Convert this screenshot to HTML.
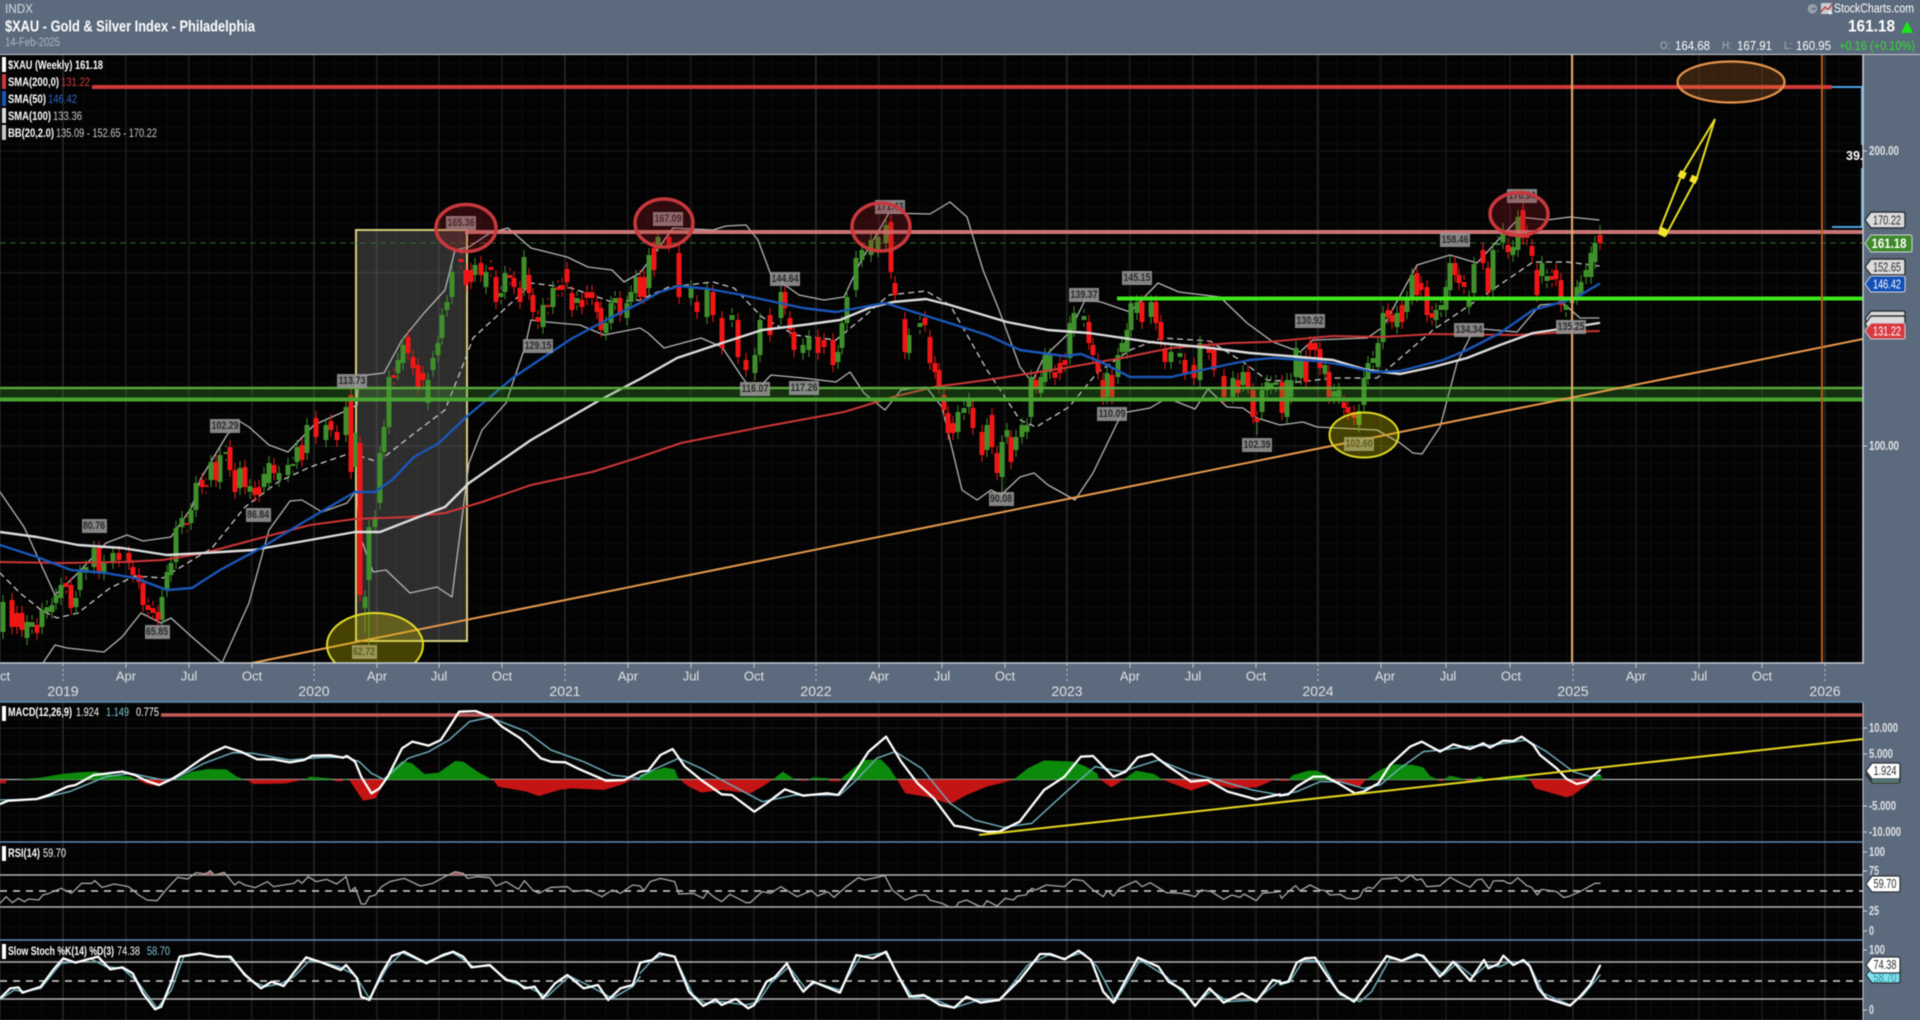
<!DOCTYPE html>
<html><head><meta charset="utf-8"><title>$XAU</title>
<style>
html,body{margin:0;padding:0;background:#5b6a7c;width:1920px;height:1020px;overflow:hidden}
svg{display:block;filter:blur(.45px)}
text{font-family:"Liberation Sans",sans-serif;dominant-baseline:central}
.z polyline,.z path,.z polygon{vector-effect:non-scaling-stroke}
polyline{fill:none;stroke-linejoin:round;stroke-linecap:round}
.a rect{fill:#969696;opacity:.88}
.a text{font-size:11px;font-weight:bold;fill:#2a2a2a;text-anchor:middle}
.m text{font-size:13px;fill:#e0e3e6;text-anchor:middle}
.y text{font-size:14px;fill:#e0e3e6;text-anchor:middle}
.l text{font-size:11.5px;fill:#fff;font-weight:bold}
.r text{font-size:12.5px;fill:#dfe2e5;font-weight:bold}
.t text{font-size:12.5px;text-anchor:middle;fill:#2b2b2b}
.w{stroke:#fff;stroke-width:2.3}
.c{stroke:#6cabb9;stroke-width:1.5}
.g{stroke:#a8a8a8;stroke-width:1.3}
</style></head><body>
<svg width="1920" height="1020" viewBox="0 0 1920 1020" xmlns="http://www.w3.org/2000/svg">
<defs>
<pattern id="mg" x="0" y="0" width="20.9" height="16" patternUnits="userSpaceOnUse"><path d="M20.9 0V16M0 16H20.9" stroke="#121212" stroke-width="1" fill="none"/></pattern>
<clipPath id="mc"><rect x="0" y="55" width="1863" height="608"/></clipPath>
<path id="t40" d="M0 8L6 0H38Q40 0 40 2V14Q40 16 38 16H6Z"/>
<path id="t47" d="M0 8.5L6 0H45Q47 0 47 2V15Q47 17 45 17H6Z"/>
<path id="t34" d="M0 8L6 0H32Q34 0 34 2V14Q34 16 32 16H6Z"/>
</defs>

<rect width="1920" height="1020" fill="#5b6a7c"/>
<!-- panels -->
<rect x="0" y="55" width="1863" height="608" fill="#030303"/>
<rect x="0" y="702" width="1863" height="318" fill="#030303"/>
<rect x="0" y="55" width="1863" height="965" fill="url(#mg)"/>
<path d="M126 55V1020M189 55V1020M252 55V1020M377 55V1020M439 55V1020M502 55V1020M628 55V1020M691 55V1020M754 55V1020M879 55V1020M942 55V1020M1005 55V1020M1130 55V1020M1193 55V1020M1256 55V1020M1381 55V1020M1446 55V1020M1510 55V1020M1636 55V1020M1699 55V1020M1762 55V1020" stroke="#1f1f1f" stroke-width="1.2" fill="none"/>
<path d="M63 55V1020M314 55V1020M565 55V1020M816 55V1020M1067 55V1020M1318 55V1020M1573 55V1020M1825 55V1020" stroke="#2a2a2a" stroke-width="1.4" fill="none"/>
<path d="M0 151H1863M0 273H1863M0 446H1863M0 728H1863M0 754H1863M0 806H1863M0 832H1863" stroke="#1c1c1c" stroke-width="1" fill="none"/>

<g clip-path="url(#mc)">
<rect x="356" y="230" width="111" height="411" fill="#fff" fill-opacity=".17" stroke="#d8cf7a" stroke-width="2"/>
<path d="M0 243H1863" stroke="#2f6b2a" stroke-width="1" stroke-dasharray="6 4"/>

<!-- BB -->
<polyline stroke="#b5b5b5" stroke-width="1.3" points="0,492 24,527 55,595 78,573 106,543 127,535 143,541 171,537 192,507 200,480 227,435 239,421 249,427 269,445 288,452 314,425 343,412 357,405 359,377 367,375 384,373 402,340 424,313 445,290 455,250 469,247 490,233 508,228 531,248 567,257 588,267 612,270 624,282 640,273 652,257 673,228 713,230 726,226 746,225 758,240 771,275 799,295 824,300 844,297 860,263 889,213 930,214 950,202 967,217 983,270 999,310 1020,367 1032,382 1044,357 1069,333 1085,300 1101,302 1130,312 1158,283 1179,292 1220,297 1247,323 1273,342 1300,352 1313,340 1367,338 1383,327 1417,265 1450,255 1477,263 1500,238 1520,217 1547,220 1570,217 1599,220"/>
<polyline stroke="#b5b5b5" stroke-width="1.3" points="43,663 55,645 67,648 104,652 122,637 141,613 161,623 171,618 192,637 222,663 249,603 269,530 290,501 302,500 322,512 347,503 357,490 359,533 373,572 386,570 410,593 437,587 452,597 455,573 469,463 482,430 506,403 525,347 531,320 547,322 580,325 604,335 640,328 648,333 664,348 701,338 722,347 742,377 754,393 771,375 803,378 836,382 850,372 864,393 885,410 901,390 926,387 942,407 962,490 977,500 991,490 1001,495 1020,477 1034,473 1048,485 1075,500 1093,473 1122,413 1150,408 1167,398 1195,409 1208,389 1227,407 1243,408 1257,418 1280,425 1303,422 1317,427 1377,430 1400,443 1413,453 1422,454 1440,427 1457,363 1470,337 1483,329 1517,332 1540,305 1563,303 1580,318 1599,318"/>
<polyline stroke="#c8c8c8" stroke-width="1.3" stroke-dasharray="5 5" points="0,573 20,593 41,610 57,618 78,613 110,588 135,576 163,578 212,548 245,507 278,482 310,467 351,453 378,462 412,435 445,410 465,360 473,338 522,293 531,283 571,288 612,302 640,300 669,287 713,282 734,288 762,317 795,335 836,340 860,320 889,295 926,291 950,305 987,370 1020,420 1036,427 1069,407 1097,373 1130,350 1162,338 1210,341 1243,362 1267,380 1300,382 1333,378 1377,378 1433,330 1467,307 1517,273 1533,262 1567,262 1599,266"/>

<!-- candles -->
<path id="cg" fill="none" stroke="#3f8f2b" d="M3 602V632M27 622V638M32 622V627M42 610V627M47 607V612M52 605V612M56 595V603M61 585V598M76 598V607M80 572V590M86 567V573M94 548V567M104 562V573M113 553V562M162 597V620M167 572V590M171 563V575M176 528V562M182 518V527M191 510V523M196 483V510M211 462V480M220 455V482M226 452V454M240 468V488M250 486V492M264 474V487M269 463V483M279 473V480M288 465V475M293 464V466M297 447V462M307 425V453M326 425V440M346 407V435M355 433V467M365 597V608M369 527V580M375 517V527M380 453V503M384 427V452M389 377V427M398 360V373M403 345V363M428 380V403M433 358V370M438 343V355M442 315V338M447 302V310M452 272V297M475 265V275M486 272V287M501 293V297M505 273V292M524 257V289M543 305V327M553 288V307M577 298V303M606 323V333M611 303V323M615 298V303M627 303V318M631 292V302M636 277V293M649 255V288M658 237V245M691 287V298M707 290V317M732 315V320M755 355V373M760 320V355M781 292V318M803 345V353M809 337V350M838 352V362M842 323V348M847 297V323M856 258V290M862 250V260M871 240V255M878 237V250M886 225V243M909 335V353M920 323V327M958 412V432M964 408V413M969 400V407M987 425V450M1002 442V477M1007 430V437M1016 437V450M1022 425V437M1027 425V432M1031 377V417M1041 377V393M1045 355V382M1050 355V372M1070 323V358M1074 313V330M1084 316V320M1107 373V397M1118 355V377M1122 343V352M1127 330V352M1131 303V330M1137 302V313M1151 302V317M1171 352V362M1180 353V357M1200 343V380M1233 378V397M1243 372V385M1262 390V412M1267 382V390M1271 383V387M1276 382V385M1287 380V417M1291 380V397M1296 348V377M1301 357V378M1325 365V374M1334 391V397M1339 390V397M1359 411V425M1364 378V405M1368 363V378M1373 358V363M1378 343V367M1383 313V342M1397 313V327M1407 298V312M1412 275V298M1436 310V320M1441 305V310M1446 287V310M1450 263V290M1469 297V307M1474 264V293M1493 250V290M1498 243V245M1503 230V242M1513 247V255M1518 217V250M1542 263V276M1547 276V281M1566 305V310M1572 297V303M1577 287V298M1581 282V293M1586 270V277M1591 253V277M1595 243V262"/>
<path id="cr" fill="none" stroke="#f01616" d="M12 600V627M17 613V627M22 613V630M37 625V633M66 583V587M71 585V608M99 548V572M119 553V560M129 553V563M133 567V575M139 575V582M143 583V605M148 605V610M153 608V613M158 612V620M187 523V525M202 480V487M206 485V487M216 462V480M230 447V470M235 470V492M245 467V487M255 488V495M259 487V495M274 465V473M302 445V460M316 418V437M331 421V430M337 432V440M351 395V472M360 443V595M394 375V378M408 337V353M413 357V368M418 365V387M423 373V380M461 259V262M466 270V285M471 270V282M481 263V275M491 267V270M496 277V302M510 275V278M514 278V287M520 288V302M529 275V293M533 295V312M538 317V322M548 305V307M558 287V290M562 285V290M567 269V282M572 293V310M582 300V307M587 292V298M592 292V298M597 302V312M601 308V330M620 298V315M640 277V297M644 277V297M654 248V270M669 237V245M679 253V297M697 302V312M713 292V315M722 318V348M738 320V357M746 360V370M770 315V335M785 292V308M790 318V330M794 332V350M818 337V353M824 340V347M833 340V365M891 222V272M895 283V295M905 319V352M925 318V325M930 337V363M935 363V372M939 370V387M944 395V410M948 413V433M953 423V433M973 408V428M982 432V455M992 415V447M997 453V473M1011 437V462M1036 380V387M1055 372V378M1060 363V373M1065 360V365M1089 322V343M1093 345V355M1098 360V372M1103 380V398M1112 375V397M1142 302V322M1156 302V323M1161 322V340M1165 350V362M1185 360V373M1194 365V378M1209 347V353M1214 350V370M1224 376V397M1238 380V393M1248 372V387M1253 390V417M1257 418V422M1282 382V413M1306 357V382M1310 343V350M1315 343V350M1320 349V368M1329 372V397M1344 402V408M1348 407V413M1354 412V418M1388 310V317M1392 315V322M1402 305V322M1417 273V295M1421 283V290M1427 287V315M1432 313V318M1455 263V275M1459 275V283M1464 282V287M1483 250V263M1488 268V292M1508 245V252M1523 210V238M1527 232V238M1532 246V256M1537 270V295M1552 276V280M1556 270V279M1561 280V305M1600 235V243"/>
<g stroke-width="1">
<use href="#cg" transform="translate(0,-7)"/><use href="#cg" transform="translate(0,7)"/>
<use href="#cr" transform="translate(0,-7)"/><use href="#cr" transform="translate(0,7)"/>
</g>
<path d="M365 597V633M1002 470V495M1359 420V432M1257 420V435M1600 225V240M369 575V650" stroke="#3f8f2b" fill="none"/>
<g stroke-width="5"><use href="#cg"/><use href="#cr"/></g>

<!-- SMAs -->
<polyline stroke="#cd3535" stroke-width="2" points="0,562 61,563 122,562 163,560 204,553 253,540 310,525 355,519 408,517 445,513 482,502 531,485 592,472 640,457 681,443 762,427 844,412 893,397 934,387 987,380 1064,368 1122,358 1171,348 1232,343 1267,342 1333,336 1380,337 1433,334 1517,335 1567,332 1599,331"/>
<polyline stroke="#dcdcdc" stroke-width="2.4" points="0,532 37,537 78,545 122,548 167,555 204,553 253,550 310,540 355,532 380,532 416,518 445,507 469,483 531,440 600,400 640,379 677,358 722,343 762,330 803,325 840,320 869,308 893,302 926,299 950,305 1007,322 1048,330 1089,333 1150,342 1211,348 1250,353 1300,357 1333,360 1367,370 1400,374 1433,367 1467,358 1500,345 1533,333 1567,328 1599,323"/>
<polyline stroke="#1a56b8" stroke-width="2.4" points="0,545 37,557 71,570 106,573 135,578 167,590 192,588 220,570 261,548 302,523 355,492 375,492 392,480 414,457 439,443 465,418 514,377 571,339 612,317 640,303 660,292 679,286 709,289 742,295 803,308 836,312 885,303 901,308 946,322 987,335 1020,350 1064,356 1081,354 1101,362 1130,377 1171,377 1211,368 1250,360 1273,358 1317,361 1343,365 1373,372 1400,371 1443,360 1467,350 1500,333 1533,310 1562,302 1577,297 1599,284"/>

<!-- horizontals -->
<rect x="0" y="388" width="1863" height="12" fill="#3fa52c" fill-opacity=".28"/>
<path d="M0 388H1863" stroke="#58a83c" stroke-width="2.5"/>
<path d="M0 399.5H1863" stroke="#4ba232" stroke-width="4"/>
<path d="M465 232H1863" stroke="#e08484" stroke-width="4" opacity=".9"/>
<path d="M1117 298.5H1863" stroke="#3fe61c" stroke-width="4"/>
<path d="M92 87H1832" stroke="#d23a3a" stroke-width="4"/>
<path d="M252 663L1863 339" stroke="#e89a4a" stroke-width="2"/>
<path d="M1572 55V663" stroke="#e8a860" stroke-width="2"/>
<path d="M1822 55V663" stroke="#b4601c" stroke-width="2"/>
<path d="M1832 87H1862V145M1862 168V227H1832" stroke="#4aa5e0" stroke-width="2" fill="none"/>
<text x="1846" y="156" font-size="12.5" font-weight="bold" fill="#fff">39.1</text>

<!-- annotations -->
<g class="a">
<rect x="446" y="216" width="30" height="14"/><text x="461" y="223" textLength="27" lengthAdjust="spacingAndGlyphs">165.36</text>
<rect x="653" y="212" width="30" height="14"/><text x="668" y="219" textLength="27" lengthAdjust="spacingAndGlyphs">167.09</text>
<rect x="875" y="200" width="30" height="14"/><text x="890" y="207" textLength="27" lengthAdjust="spacingAndGlyphs">171.43</text>
<rect x="770" y="272" width="30" height="14"/><text x="785" y="279" textLength="27" lengthAdjust="spacingAndGlyphs">144.64</text>
<rect x="1122" y="271" width="30" height="14"/><text x="1137" y="278" textLength="27" lengthAdjust="spacingAndGlyphs">145.15</text>
<rect x="1069" y="288" width="30" height="14"/><text x="1084" y="295" textLength="27" lengthAdjust="spacingAndGlyphs">139.37</text>
<rect x="523" y="339" width="30" height="14"/><text x="538" y="346" textLength="27" lengthAdjust="spacingAndGlyphs">129.15</text>
<rect x="337" y="374" width="30" height="14"/><text x="352" y="381" textLength="27" lengthAdjust="spacingAndGlyphs">113.73</text>
<rect x="210" y="419" width="30" height="14"/><text x="225" y="426" textLength="27" lengthAdjust="spacingAndGlyphs">102.29</text>
<rect x="82" y="519" width="25" height="14"/><text x="94" y="526" textLength="22" lengthAdjust="spacingAndGlyphs">80.76</text>
<rect x="246" y="508" width="25" height="14"/><text x="258" y="515" textLength="22" lengthAdjust="spacingAndGlyphs">86.84</text>
<rect x="145" y="625" width="25" height="14"/><text x="157" y="632" textLength="22" lengthAdjust="spacingAndGlyphs">65.85</text>
<rect x="352" y="645" width="25" height="14"/><text x="364" y="652" textLength="22" lengthAdjust="spacingAndGlyphs">62.72</text>
<rect x="740" y="382" width="30" height="14"/><text x="755" y="389" textLength="27" lengthAdjust="spacingAndGlyphs">116.07</text>
<rect x="789" y="381" width="30" height="14"/><text x="804" y="388" textLength="27" lengthAdjust="spacingAndGlyphs">117.26</text>
<rect x="1097" y="407" width="30" height="14"/><text x="1112" y="414" textLength="27" lengthAdjust="spacingAndGlyphs">110.09</text>
<rect x="989" y="492" width="25" height="14"/><text x="1001" y="499" textLength="22" lengthAdjust="spacingAndGlyphs">90.08</text>
<rect x="1242" y="438" width="30" height="14"/><text x="1257" y="445" textLength="27" lengthAdjust="spacingAndGlyphs">102.39</text>
<rect x="1344" y="437" width="30" height="14"/><text x="1359" y="444" textLength="27" lengthAdjust="spacingAndGlyphs">102.60</text>
<rect x="1295" y="314" width="30" height="14"/><text x="1310" y="321" textLength="27" lengthAdjust="spacingAndGlyphs">130.92</text>
<rect x="1440" y="233" width="30" height="14"/><text x="1455" y="240" textLength="27" lengthAdjust="spacingAndGlyphs">158.46</text>
<rect x="1507" y="189" width="30" height="14"/><text x="1522" y="196" textLength="27" lengthAdjust="spacingAndGlyphs">170.94</text>
<rect x="1454" y="323" width="30" height="14"/><text x="1469" y="330" textLength="27" lengthAdjust="spacingAndGlyphs">134.34</text>
<rect x="1556" y="320" width="30" height="14"/><text x="1571" y="327" textLength="27" lengthAdjust="spacingAndGlyphs">135.25</text>
</g>

<!-- ellipses -->
<g stroke="#c9383c" stroke-width="3.5" fill="#b41e28" fill-opacity=".25">
<ellipse cx="466" cy="228" rx="30" ry="23.5"/>
<ellipse cx="664" cy="223" rx="29" ry="24"/>
<ellipse cx="881" cy="227" rx="29" ry="24"/>
<ellipse cx="1519" cy="214" rx="29" ry="21.5"/>
</g>
<g stroke="#e2da22" stroke-width="2" fill="#c8be00" fill-opacity=".33">
<ellipse cx="375" cy="645" rx="48" ry="32"/>
<ellipse cx="1364" cy="435" rx="34.5" ry="22.5"/>
</g>
<ellipse cx="1731" cy="82" rx="53.5" ry="20.5" fill="#e68c32" fill-opacity=".22" stroke="#e8944a" stroke-width="2.2"/>

<!-- arrow -->
<path d="M1660 229L1682 174L1715 119L1697 177L1666 235Z" fill="none" stroke="#e8dc20" stroke-width="2"/>
<rect x="1659" y="228" width="8" height="8" fill="#f3e52a" transform="rotate(25 1663 232)"/>
<rect x="1679" y="171" width="7" height="7" fill="#f3e52a" transform="rotate(25 1682 174)"/>
<rect x="1690" y="176" width="7" height="7" fill="#f3e52a" transform="rotate(25 1694 180)"/>
</g>

<!-- borders and gaps -->
<rect x="0" y="663" width="1920" height="39" fill="#5b6a7c"/>
<rect x="1863" y="55" width="57" height="965" fill="#5b6a7c"/>
<path d="M0 54.5H1920" stroke="#c6ced6" stroke-width="1"/>
<path d="M0 663H1864M1863 55V663" stroke="#c6ced6" stroke-width="1.5" fill="none"/>
<path d="M1863 702V1020" stroke="#c6ced6" stroke-width="1"/>
<path d="M0 702H1863M0 842H1863M0 940H1863" stroke="#5d8db5" stroke-width="1.6"/>

<!-- x-axis -->
<path d="M126 663V668M189 663V668M252 663V668M377 663V668M439 663V668M502 663V668M628 663V668M691 663V668M754 663V668M879 663V668M942 663V668M1005 663V668M1130 663V668M1193 663V668M1256 663V668M1381 663V668M1446 663V668M1510 663V668M1636 663V668M1699 663V668M1762 663V668" stroke="#c6ced6" stroke-width="1"/>
<path d="M63 664V683M314 664V683M565 664V683M816 664V683M1067 664V683M1318 664V683M1573 664V683M1825 664V683" stroke="#c6ced6" stroke-width="1" stroke-dasharray="2 3"/>
<g class="m">
<text x="0" y="676">Oct</text><text x="126" y="676">Apr</text><text x="189" y="676">Jul</text><text x="252" y="676">Oct</text>
<text x="377" y="676">Apr</text><text x="439" y="676">Jul</text><text x="502" y="676">Oct</text>
<text x="628" y="676">Apr</text><text x="691" y="676">Jul</text><text x="754" y="676">Oct</text>
<text x="879" y="676">Apr</text><text x="942" y="676">Jul</text><text x="1005" y="676">Oct</text>
<text x="1130" y="676">Apr</text><text x="1193" y="676">Jul</text><text x="1256" y="676">Oct</text>
<text x="1385" y="676">Apr</text><text x="1448" y="676">Jul</text><text x="1511" y="676">Oct</text>
<text x="1636" y="676">Apr</text><text x="1699" y="676">Jul</text><text x="1762" y="676">Oct</text>
</g>
<g class="y">
<text x="63" y="691">2019</text><text x="314" y="691">2020</text><text x="565" y="691">2021</text><text x="816" y="691">2022</text><text x="1067" y="691">2023</text><text x="1318" y="691">2024</text><text x="1573" y="691">2025</text><text x="1825" y="691">2026</text>
</g>

<!-- MACD fixed lines -->
<path d="M161 715H1863" stroke="#c45a5a" stroke-width="3.5"/>
<path d="M0 779.5H1863" stroke="#b5b5b5" stroke-width="1.3"/>
<!-- RSI/Stoch levels -->
<path d="M0 875H1863M0 907H1863M0 962H1863M0 999H1863" stroke="#b5b5b5" stroke-width="1.4"/>
<path d="M0 891H1863M0 981H1863" stroke="#d8d8d8" stroke-width="1.4" stroke-dasharray="7 6"/>

<!-- z7 -->
<g class="z" transform="translate(0,680) scale(.40816,.33333)">
<path fill="#0c8a0c" d="M40 299L100 293 150 282 190 277 235 275 260 282 320 290 335 299ZM430 299L470 275 510 267 555 268 580 290 600 299ZM745 299L760 290 810 295 815 299ZM840 299L845 295 852 299ZM945 299L960 270 985 243 1010 250 1040 282 1075 278 1115 243 1135 245 1170 275 1205 299Z"/>
<path fill="#c41414" d="M0 299H15V310H0ZM335 299L360 312 385 318 420 299ZM605 299L620 312 700 310 745 299ZM820 299H840V304H820ZM855 299L880 345 890 362 920 355 945 299ZM1208 299L1220 320 1290 335 1320 348 1370 330 1400 325 1480 330 1520 315 1550 299Z"/>
<polygon fill="#a85a5a" points="475,585 505,578 515,572 525,585 555,585 550,575 540,578 525,585"/>
<polygon fill="#a85a5a" points="1095,585 1115,575 1135,580 1138,585"/>
<polyline class="c" vector-effect="non-scaling-stroke" points="0,360 90,358 170,335 260,290 320,280 400,300 430,295 500,250 570,218 620,220 710,240 790,232 850,232 880,245 910,280 940,298 1000,235 1050,215 1100,180 1150,125 1200,112 1290,155 1350,210 1430,245 1500,285 1568,295"/>
<polyline class="w" vector-effect="non-scaling-stroke" points="0,372 20,362 90,357 120,345 165,320 185,315 230,285 300,275 330,285 360,303 390,315 420,298 450,275 490,240 520,218 552,200 590,215 630,238 670,238 710,247 745,240 765,227 810,226 840,233 850,228 870,245 885,290 910,340 930,325 950,290 985,205 1010,185 1050,197 1080,180 1125,95 1165,93 1205,112 1230,140 1275,175 1325,235 1350,245 1385,247 1420,268 1485,302 1530,300 1568,275"/>
<polyline class="g" vector-effect="non-scaling-stroke" points="0,670 15,650 30,668 45,655 60,665 70,657 95,660 105,645 120,640 150,625 175,640 200,610 225,610 232,602 250,622 280,612 315,620 340,645 360,660 385,662 410,625 435,592 460,597 480,578 505,582 515,572 525,585 550,578 575,615 585,605 600,615 625,623 655,605 670,620 720,610 730,600 740,610 755,590 775,605 800,598 825,612 848,590 858,635 870,622 885,672 895,672 905,650 920,645 935,620 955,605 990,595 1030,618 1060,610 1090,590 1115,575 1135,580 1145,595 1170,590 1200,593 1215,618 1240,605 1270,628 1285,602 1305,630 1320,640 1350,622 1390,620 1405,635 1440,630 1475,650 1500,630 1520,640 1550,615 1568,618"/>
<polyline class="c" vector-effect="non-scaling-stroke" points="0,958 35,930 60,935 100,925 150,850 190,845 220,835 260,860 300,865 340,910 385,985 420,930 450,830 490,822 560,832 620,905 650,920 690,910 720,890 760,840 830,860 870,885 905,955 950,860 985,818 1040,848 1110,818 1160,860 1200,858 1250,905 1300,925 1340,950 1395,888 1440,915 1500,955 1550,920 1568,890"/>
<polyline class="w" vector-effect="non-scaling-stroke" points="0,955 25,925 45,922 55,938 100,920 130,870 155,835 185,848 215,838 240,830 270,868 300,862 325,880 350,940 380,988 395,980 420,905 440,830 490,820 530,830 565,830 600,885 640,925 665,905 695,918 725,870 750,832 790,848 835,870 848,855 875,895 885,950 905,960 935,880 960,828 990,815 1045,850 1085,825 1110,815 1135,830 1155,862 1200,855 1240,900 1265,905 1285,925 1310,920 1330,955 1360,910 1390,885 1430,925 1465,915 1490,960 1520,925 1550,915 1568,850"/>
</g>
<!-- z8 -->
<g class="z" transform="translate(640,680) scale(.40816,.33333)">
<path fill="#0c8a0c" d="M0 299V285L60 262 85 268 95 299ZM325 299L350 275 380 299ZM410 299L425 292 465 295V299ZM490 299L520 268 550 240 590 238 610 262 630 299ZM915 299L950 265 990 241 1060 245 1090 258 1120 280 1125 299ZM1185 299L1215 272 1260 282 1280 299Z"/>
<path fill="#c41414" d="M97 299L120 320 150 338 200 330 270 340 300 320 325 299ZM395 299H405V303H395ZM465 299H490V304H465ZM630 299L650 340 700 350 760 372 800 345 850 320 890 308 915 299ZM1127 299L1155 322 1185 299ZM1280 299L1350 332 1400 310 1450 325 1510 322 1555 299Z"/>
<polyline class="c" vector-effect="non-scaling-stroke" points="0,290 40,265 95,235 150,265 200,300 300,365 380,345 490,345 530,300 580,235 625,215 690,265 760,370 820,420 890,442 960,430 1040,340 1115,260 1180,275 1270,240 1350,280 1430,305 1500,330 1568,345"/>
<polyline class="w" vector-effect="non-scaling-stroke" points="0,275 20,272 50,225 80,207 110,260 150,300 200,343 225,345 280,395 310,370 355,328 400,347 460,340 485,345 520,290 560,215 603,170 640,245 680,310 720,355 770,437 800,443 850,455 880,455 930,425 990,330 1040,290 1080,230 1110,228 1160,290 1190,275 1220,232 1255,222 1290,255 1350,305 1390,300 1440,335 1510,358 1568,343"/>
<polyline class="g" vector-effect="non-scaling-stroke" points="0,618 10,632 25,605 50,595 85,605 95,642 130,640 155,655 165,635 180,650 200,665 220,643 260,668 270,668 300,635 320,640 345,620 385,650 420,632 435,648 460,635 475,652 505,620 535,593 550,600 600,587 618,630 650,660 680,645 700,645 710,660 740,670 760,682 775,680 780,668 800,660 830,678 840,680 850,662 875,678 895,655 915,660 925,648 945,645 960,625 970,630 995,615 1040,620 1060,598 1085,602 1110,630 1135,650 1145,632 1160,648 1175,625 1215,603 1230,620 1250,608 1290,638 1330,640 1360,650 1375,630 1400,635 1430,658 1450,645 1470,652 1480,642 1510,662 1525,640 1568,635"/>
<polyline class="c" vector-effect="non-scaling-stroke" points="0,880 30,840 60,823 85,830 130,945 160,970 200,965 260,975 290,965 320,910 365,860 405,925 430,908 490,930 540,830 600,818 640,900 670,955 700,948 770,983 830,960 880,962 950,855 1000,825 1040,835 1085,818 1120,860 1165,965 1225,840 1290,890 1360,975 1400,932 1440,965 1510,960 1568,900"/>
<polyline class="w" vector-effect="non-scaling-stroke" points="0,848 30,840 48,820 85,830 120,935 155,978 185,958 200,975 235,957 265,985 280,975 310,905 330,892 360,850 375,890 400,935 425,905 490,938 530,825 570,835 603,815 625,870 660,950 695,945 735,975 770,983 800,950 835,968 880,960 930,900 980,822 1005,822 1040,838 1075,812 1105,840 1135,935 1160,968 1220,833 1270,860 1295,905 1330,930 1360,978 1395,925 1430,968 1475,940 1510,965 1550,900 1568,905"/>
</g>
<!-- z9 -->
<g class="z" transform="translate(1280,680) scale(.33333,.33333)">
<path fill="#0c8a0c" d="M25 299L40 285 85 272 110 272 150 290 158 299ZM258 299L300 270 340 253 400 255 430 262 450 288 475 299ZM490 299L510 287 560 299ZM575 299L600 290 615 299ZM640 299L670 290 720 286 750 299ZM938 299L945 290 965 287V300Z"/>
<path fill="#c41414" d="M0 299H25V303H0ZM160 299L170 302 240 320 258 299ZM475 299H490V303H475ZM560 299H575V303H560ZM750 299L765 325 860 352 880 345 938 302V299Z"/>
<polyline class="c" vector-effect="non-scaling-stroke" points="0,345 50,335 120,305 180,305 250,325 300,315 360,265 430,215 500,208 560,200 640,195 740,180 800,215 880,275 930,290 960,285"/>
<polyline class="w" vector-effect="non-scaling-stroke" points="0,347 25,343 50,320 100,290 135,290 175,310 225,340 250,335 295,310 330,255 390,200 425,185 480,215 520,193 570,207 610,190 630,203 670,182 700,183 725,170 760,195 780,225 830,265 860,297 890,312 920,305 960,270"/>
<polyline class="g" vector-effect="non-scaling-stroke" points="0,645 5,655 25,635 47,617 60,632 90,615 120,630 135,632 150,645 180,643 200,655 225,657 240,650 250,630 265,622 280,625 305,597 335,595 350,592 365,605 392,585 410,600 425,597 440,620 480,617 510,592 540,608 570,622 590,600 605,597 628,627 640,603 670,602 685,610 695,610 713,593 740,617 755,622 772,645 785,628 830,635 850,652 865,650 900,635 945,610 960,610"/>
<polyline class="c" vector-effect="non-scaling-stroke" points="0,915 30,905 70,840 125,845 180,945 240,965 275,935 330,835 370,842 420,825 490,885 530,850 580,890 620,855 660,860 690,845 745,848 790,940 870,975 910,945 960,885"/>
<polyline class="w" vector-effect="non-scaling-stroke" points="0,910 25,905 50,848 75,835 105,833 150,900 175,935 222,965 260,915 320,828 365,842 410,823 430,828 480,890 520,845 570,902 612,840 625,865 655,852 670,827 700,855 730,840 750,860 775,925 800,955 870,977 900,950 930,915 960,857"/>
</g>
<path d="M979 835L1863 739" stroke="#e6d81e" stroke-width="2"/>

<!-- legends -->
<g class="l">
<rect x="2" y="57" width="4" height="15" fill="#fff"/><text x="8" y="66" textLength="95" lengthAdjust="spacingAndGlyphs">$XAU (Weekly) 161.18</text>
<rect x="2" y="74" width="4" height="15" fill="#d23a3a"/><text x="8" y="83" textLength="51" lengthAdjust="spacingAndGlyphs">SMA(200,0)</text><text x="61" y="83" textLength="29" lengthAdjust="spacingAndGlyphs" style="fill:#d23a3a;font-weight:normal">131.22</text>
<rect x="2" y="91" width="4" height="15" fill="#1a56b8"/><text x="8" y="100" textLength="38" lengthAdjust="spacingAndGlyphs">SMA(50)</text><text x="48" y="100" textLength="29" lengthAdjust="spacingAndGlyphs" style="fill:#2a66c8;font-weight:normal">146.42</text>
<rect x="2" y="108" width="4" height="15" fill="#dcdcdc"/><text x="8" y="117" textLength="43" lengthAdjust="spacingAndGlyphs">SMA(100)</text><text x="53" y="117" textLength="29" lengthAdjust="spacingAndGlyphs" style="fill:#ccc;font-weight:normal">133.36</text>
<rect x="2" y="125" width="4" height="15" fill="#c8c8c8"/><text x="8" y="134" textLength="46" lengthAdjust="spacingAndGlyphs">BB(20,2.0)</text><text x="56" y="134" textLength="101" lengthAdjust="spacingAndGlyphs" style="fill:#ccc;font-weight:normal">135.09 - 152.65 - 170.22</text>
<rect x="2" y="706" width="4" height="15" fill="#fff"/><text x="8" y="713" textLength="64" lengthAdjust="spacingAndGlyphs">MACD(12,26,9)</text><text x="76" y="713" textLength="23" lengthAdjust="spacingAndGlyphs" style="font-weight:normal">1.924</text><text x="106" y="713" textLength="23" lengthAdjust="spacingAndGlyphs" style="fill:#7fc4d4;font-weight:normal">1.149</text><text x="136" y="713" textLength="23" lengthAdjust="spacingAndGlyphs" style="font-weight:normal">0.775</text>
<rect x="2" y="846" width="4" height="15" fill="#fff"/><text x="8" y="854" textLength="32" lengthAdjust="spacingAndGlyphs">RSI(14)</text><text x="43" y="854" textLength="23" lengthAdjust="spacingAndGlyphs" style="font-weight:normal">59.70</text>
<rect x="2" y="944" width="4" height="15" fill="#fff"/><text x="8" y="952" textLength="106" lengthAdjust="spacingAndGlyphs">Slow Stoch %K(14) %D(3)</text><text x="117" y="952" textLength="23" lengthAdjust="spacingAndGlyphs" style="font-weight:normal">74.38</text><text x="147" y="952" textLength="23" lengthAdjust="spacingAndGlyphs" style="fill:#7fc4d4;font-weight:normal">58.70</text>
</g>

<!-- header -->
<text x="5" y="9" font-size="12.5" fill="#d8dde3" textLength="28" lengthAdjust="spacingAndGlyphs">INDX</text>
<text x="5" y="27" font-size="16" font-weight="bold" fill="#fff" textLength="250" lengthAdjust="spacingAndGlyphs">$XAU - Gold &amp; Silver Index - Philadelphia</text>
<text x="5" y="43" font-size="11.5" fill="#b0b8c2" textLength="55" lengthAdjust="spacingAndGlyphs">14-Feb-2025</text>
<text x="1808" y="9" font-size="12" fill="#fff">©</text>
<rect x="1821" y="3" width="11" height="11" fill="#c8cdd4"/><path d="M1821 12L1825 7 1828 10 1832 4" stroke="#c0392b" stroke-width="1.4" fill="none"/><path d="M1827 9L1833 14 1829 14 1831 17Z" fill="#fff"/>
<text x="1834" y="8" font-size="13" fill="#fff" textLength="80" lengthAdjust="spacingAndGlyphs">StockCharts.com</text>
<text x="1848" y="26" font-size="17" font-weight="bold" fill="#fff" textLength="47" lengthAdjust="spacingAndGlyphs">161.18</text>
<path d="M1907 21L1913 33H1901Z" fill="#19e619"/>
<text x="1660" y="46" font-size="11" fill="#aab2bc" textLength="10" lengthAdjust="spacingAndGlyphs">O:</text>
<text x="1675" y="46" font-size="12.5" fill="#fff" textLength="35" lengthAdjust="spacingAndGlyphs">164.68</text>
<text x="1722" y="46" font-size="11" fill="#aab2bc" textLength="10" lengthAdjust="spacingAndGlyphs">H:</text>
<text x="1737" y="46" font-size="12.5" fill="#fff" textLength="35" lengthAdjust="spacingAndGlyphs">167.91</text>
<text x="1784" y="46" font-size="11" fill="#aab2bc" textLength="8" lengthAdjust="spacingAndGlyphs">L:</text>
<text x="1796" y="46" font-size="12.5" fill="#fff" textLength="35" lengthAdjust="spacingAndGlyphs">160.95</text>
<text x="1839" y="46" font-size="12.5" fill="#33dd33" textLength="76" lengthAdjust="spacingAndGlyphs">+0.16 (+0.10%)</text>

<!-- right axis labels -->
<g class="r">
<path d="M1863 151H1867M1863 728H1867M1863 754H1867M1863 806H1867M1863 832H1867M1863 852H1867M1863 871H1867M1863 911H1867M1863 931H1867M1863 950H1867M1863 1010H1867M1863 446H1867" stroke="#d8dce0" stroke-width="1"/>
<text x="1869" y="151" textLength="30" lengthAdjust="spacingAndGlyphs">200.00</text>
<text x="1869" y="446" textLength="30" lengthAdjust="spacingAndGlyphs">100.00</text>
<text x="1869" y="728" textLength="29" lengthAdjust="spacingAndGlyphs">10.000</text>
<text x="1869" y="754" textLength="24" lengthAdjust="spacingAndGlyphs">5.000</text>
<text x="1869" y="806" textLength="27" lengthAdjust="spacingAndGlyphs">-5.000</text>
<text x="1869" y="832" textLength="32" lengthAdjust="spacingAndGlyphs">-10.000</text>
<text x="1869" y="852" textLength="16" lengthAdjust="spacingAndGlyphs">100</text>
<text x="1869" y="871" textLength="10" lengthAdjust="spacingAndGlyphs">75</text>
<text x="1869" y="911" textLength="10" lengthAdjust="spacingAndGlyphs">25</text>
<text x="1869" y="931" textLength="5" lengthAdjust="spacingAndGlyphs">0</text>
<text x="1869" y="950" textLength="16" lengthAdjust="spacingAndGlyphs">100</text>
<text x="1869" y="1010" textLength="5" lengthAdjust="spacingAndGlyphs">0</text>
</g>

<!-- price tags -->
<g stroke="#2b3036" stroke-width="1.4">
<use href="#t40" x="1865" y="212" fill="#dcdcdc"/>
<use href="#t40" x="1865" y="311" fill="#dcdcdc"/>
<use href="#t40" x="1865" y="316" fill="#dcdcdc"/>
</g>
<g stroke="#cfd6dc" stroke-width="1">
<use href="#t47" x="1865" y="235" fill="#3e8a2a"/>
</g>
<g stroke="#2b3036" stroke-width="1.4"><use href="#t40" x="1865" y="259" fill="#dcdcdc"/></g>
<g stroke="#cfd6dc" stroke-width="1">
<use href="#t40" x="1865" y="276" fill="#1250b8"/>
<use href="#t40" x="1865" y="323" fill="#d83a40"/>
</g>
<g stroke="#2b3036" stroke-width="1.2">
<use href="#t34" x="1866" y="767" fill="#9be39b"/>
<use href="#t34" x="1866" y="765" fill="#7fe3ee"/>
<use href="#t34" x="1866" y="763" fill="#fff"/>
<use href="#t34" x="1866" y="876" fill="#fff"/>
<use href="#t34" x="1866" y="967" fill="#7fe3ee"/>
<use href="#t34" x="1866" y="957" fill="#fff"/>
</g>
<g class="t">
<text x="1887" y="220.5" textLength="28" lengthAdjust="spacingAndGlyphs">170.22</text>
<text x="1889" y="243.5" textLength="35" lengthAdjust="spacingAndGlyphs" font-weight="bold" style="font-size:13.5px;fill:#fff">161.18</text>
<text x="1887" y="267.5" textLength="28" lengthAdjust="spacingAndGlyphs">152.65</text>
<text x="1887" y="284.5" textLength="28" lengthAdjust="spacingAndGlyphs" style="fill:#fff">146.42</text>
<text x="1887" y="331.5" textLength="28" lengthAdjust="spacingAndGlyphs" style="fill:#fff">131.22</text>
<text x="1885" y="771" textLength="23" lengthAdjust="spacingAndGlyphs">1.924</text>
<text x="1885" y="884" textLength="23" lengthAdjust="spacingAndGlyphs">59.70</text>
<text x="1885" y="978" textLength="23" lengthAdjust="spacingAndGlyphs" style="fill:#3a8a9a">58.70</text>
<text x="1885" y="965" textLength="23" lengthAdjust="spacingAndGlyphs">74.38</text>
</g>
</svg>
</body></html>
